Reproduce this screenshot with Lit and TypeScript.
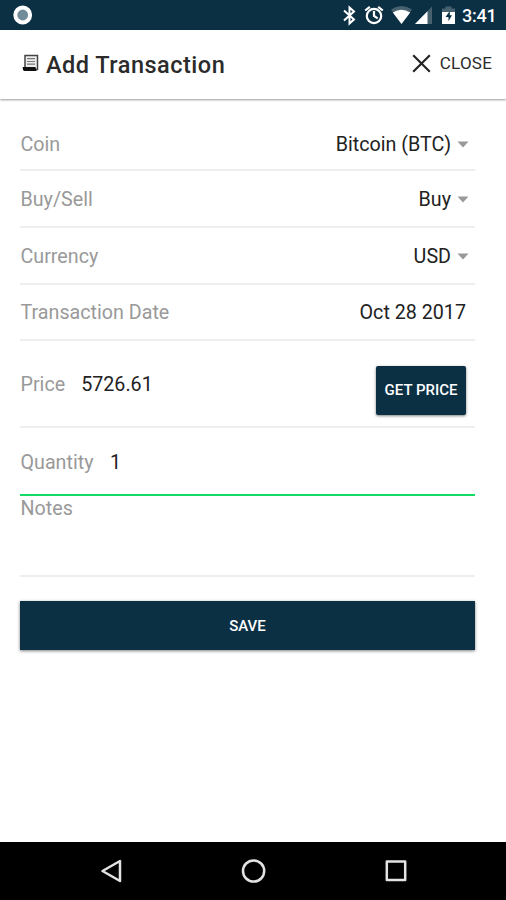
import { LitElement, html, css, svg } from "lit";
import { customElement, property } from "lit/decorators.js";

@customElement("status-bar")
class StatusBar extends LitElement {
  static styles = css`
    :host { display: flex; height: 30px; box-sizing: border-box; background: #0b3044; color: #fff; align-items: center; justify-content: space-between; padding: 0 10px 0 12px; }
    svg { display: block; }
    .right { display: flex; align-items: center; }
    .bt { margin-right: 8px; }
    .alarm { margin-right: 7px; }
    .wifi { margin-right: 3px; }
    .cell { margin-right: 10px; }
    .battery { margin-right: 7px; }
    .time { font: 500 18px/30px Roboto, sans-serif; letter-spacing: -.2px; padding-top: 2px; width: 34px; white-space: nowrap; }
  `;
  render() {
    return html`
      <svg width="21" height="30" viewBox="0 0 21 30"><circle cx="10.7" cy="15" r="7.4" fill="#718d99" stroke="#fff" stroke-width="4" /></svg>
      <div class="right">
        <svg class="bt" width="13" height="30" viewBox="0 0 13 30"><path d="M1 10.5 11 19.5 6.5 23.5V7.5L11 11.5 1 20.5" fill="none" stroke="#fff" stroke-width="2" /></svg>
        <svg class="alarm" width="20" height="30" viewBox="0 0 20 30"><g fill="none" stroke="#fff" stroke-width="2.2"><circle cx="10" cy="16" r="7.2" /><path d="M10 11v5l3.7 2.4M1.2 10.5 5.8 6.8M18.8 10.5 14.2 6.8" /></g></svg>
        <svg class="wifi" width="21" height="30" viewBox="0 0 21 30"><path d="M0 9.5Q10.5 2.5 21 9.5L10.5 24Z" fill="#47616f" /><path d="M1.8 12.5Q10.5 7 19.2 12.5L10.5 24Z" fill="#fff" /></svg>
        <svg class="cell" width="17" height="30" viewBox="0 0 17 30"><path d="M17 6.5V24H0Z" fill="#47616f" /><path d="M12.5 11.2V24H0Z" fill="#fff" /></svg>
        <svg class="battery" width="13" height="30" viewBox="0 0 13 30"><path d="M0 8.5H3.5V6.5H9.5V8.5H13V13H0Z" fill="#47616f" /><path d="M0 12H13V24H0Z" fill="#fff" /><path d="M7.8 11 3.5 17h3v4.3L10 15.3H7.8Z" fill="#0b3044" /></svg>
        <span class="time">3:41</span>
      </div>`;
  }
}

@customElement("page-header")
class PageHeader extends LitElement {
  static styles = css`
    :host { display: flex; height: 69px; box-sizing: border-box; padding: 0 14px 0 22px; align-items: center; justify-content: space-between; background: #fff; box-shadow: 0 1px 2px rgba(0, 0, 0, .4); font-family: Roboto, sans-serif; color: #2b2b2b; position: relative; }
    .title, .close { display: flex; align-items: center; white-space: nowrap; }
    .title { font-size: 23.5px; font-weight: 500; letter-spacing: .5px; gap: 6px; }
    .close { font-size: 17px; letter-spacing: .2px; gap: 9px; margin-top: -3px; }
    svg { display: block; }
    .doc { margin-top: -4px; }
  `;
  render() {
    return html`
      <div class="title">
        <svg class="doc" width="18" height="18" viewBox="0 0 18 18"><path d="M3 13V1.5H15.5V15.5H14" fill="#eee" stroke="#444" stroke-width="1.5" /><path d="M.7 13H13.5L14.5 17H2.5Q.7 17 .7 13Z" fill="#111" /><path d="M5 4.7H13M5 7.5H13M5 10.2H13" stroke="#777" stroke-width="1.2" /></svg>
        <span>Add Transaction</span>
      </div>
      <div class="close">
        <svg width="19" height="19" viewBox="0 0 19 19"><path d="M1.2 1.2 17.8 17.8M17.8 1.2 1.2 17.8" stroke="#222" stroke-width="2.1" /></svg>
        <span>CLOSE</span>
      </div>`;
  }
}

@customElement("select-row")
class SelectRow extends LitElement {
  @property() label = "";
  @property() value = "";
  @property({ type: Boolean }) plain = false;
  static styles = css`
    :host { display: flex; align-items: center; justify-content: space-between; box-sizing: border-box; height: 56.7px; border-bottom: 2px solid #eee; padding: 2px 6px 0 .5px; font: 19.7px Roboto, sans-serif; white-space: nowrap; }
    .label { color: #999; }
    .value { color: #222; display: flex; align-items: center; gap: 6px; }
    .value.plain { padding-right: 3px; }
    svg { display: block; }
  `;
  render() {
    return html`
      <span class="label">${this.label}</span>
      <span class="value ${this.plain ? "plain" : ""}">${this.value}
        ${this.plain ? "" : html`<svg width="12" height="7" viewBox="0 0 12 7"><path d="M.5.5H11.5L6 6.5Z" fill="#999" /></svg>`}
      </span>`;
  }
}

@customElement("app-root")
class AppRoot extends LitElement {
  static styles = css`
    :host { display: flex; flex-direction: column; height: 900px; background: #fff; font: 19.7px Roboto, sans-serif; overflow: hidden; }
    main { flex: 1; padding: 19px 31px 0 20px; }
    .label { color: #999; }
    .value { color: #222; }
    .row { display: flex; box-sizing: border-box; border-bottom: 2px solid #eee; white-space: nowrap; line-height: 24px; padding-left: .5px; }
    .first { height: 53.2px; }
    .price { height: 86.5px; padding: 31.5px 9px 0 .5px; gap: 16px; }
    .quantity { height: 68px; padding-top: 23px; gap: 16.5px; border-bottom: 2px solid #15da66; }
    .notes { height: 81px; padding-top: 1px; }
    button { border: 0; padding: 0; background: #0b3044; color: #fff; font: 500 15px Roboto, sans-serif; box-shadow: 0 1px 3px rgba(0, 0, 0, .5); display: block; }
    .get { width: 90px; height: 49px; border-radius: 2px; margin: -7px 0 0 auto; }
    .save { width: 455px; height: 49px; margin-top: 24.7px; }
    nav { height: 58px; background: #000; display: flex; align-items: center; justify-content: space-between; padding: 0 97px 0 99px; box-sizing: border-box; }
    nav svg { display: block; }
  `;
  private icon(shape: unknown) {
    return html`<svg width="26" height="26" viewBox="0 0 26 26" fill="none" stroke="#e3e3e3" stroke-width="2.5">${shape}</svg>`;
  }
  render() {
    return html`
      <status-bar></status-bar>
      <page-header></page-header>
      <main>
        <select-row class="first" label="Coin" value="Bitcoin (BTC)"></select-row>
        <select-row label="Buy/Sell" value="Buy"></select-row>
        <select-row label="Currency" value="USD"></select-row>
        <select-row label="Transaction Date" value="Oct 28 2017" plain></select-row>
        <div class="row price"><span class="label">Price</span><span class="value">5726.61</span><button class="get">GET PRICE</button></div>
        <div class="row quantity"><span class="label">Quantity</span><span class="value">1</span></div>
        <div class="row notes"><span class="label">Notes</span></div>
        <button class="save">SAVE</button>
      </main>
      <nav>
        ${this.icon(svg`<path d="M3.5 13 21 3V23Z" stroke-linejoin="round" />`)}
        ${this.icon(svg`<circle cx="12.6" cy="13" r="10.6" />`)}
        ${this.icon(svg`<rect x="3.8" y="3.5" width="18.4" height="18.4" stroke-linejoin="round" />`)}
      </nav>`;
  }
}
